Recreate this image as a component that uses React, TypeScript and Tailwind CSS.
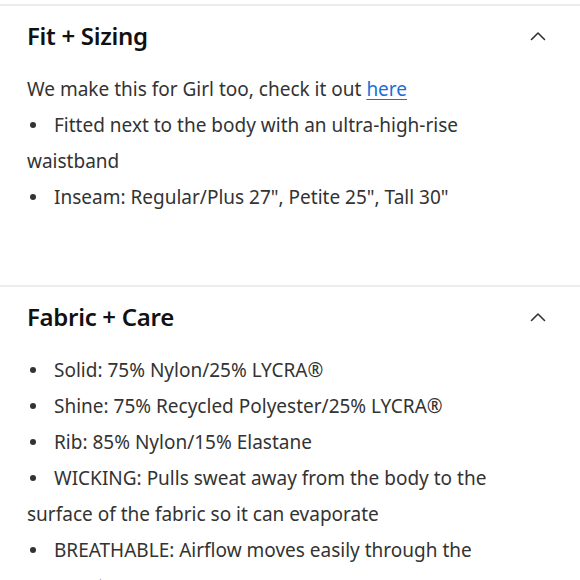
import React from 'react';

const fitItems = [
  'Fitted next to the body with an ultra-high-rise waistband',
  'Inseam: Regular/Plus 27", Petite 25", Tall 30"',
];

const fabricItems = [
  'Solid: 75% Nylon/25% LYCRA®',
  'Shine: 75% Recycled Polyester/25% LYCRA®',
  'Rib: 85% Nylon/15% Elastane',
  'WICKING: Pulls sweat away from the body to the surface of the fabric so it can evaporate',
  'BREATHABLE: Airflow moves easily through the garment',
];

const Chevron: React.FC = () => (
  <svg width="16" height="10" viewBox="0 0 16 10" fill="none" className="text-[#333]">
    <path d="M1.5 8.5 L8 2 L14.5 8.5" stroke="currentColor" strokeWidth="1.6" strokeLinecap="round" strokeLinejoin="round" />
  </svg>
);

const Bullet: React.FC<{ text: string }> = ({ text }) => (
  <p>
    <span className="inline-block w-[6px] h-[6px] rounded-full bg-[#333] align-middle ml-[3px] mr-[18px] mb-[3px]" />
    {text}
  </p>
);

const Section: React.FC<{ title: string; children: React.ReactNode; padBottom?: string }> = ({ title, children, padBottom }) => (
  <section className="border-t-2 border-[#ececec]">
    <div className="flex items-center justify-between pl-[27px] pr-[34px] h-[65px] pb-[6px]">
      <h2 className="text-[24px] font-semibold text-[#111] tracking-[-0.3px]">{title}</h2>
      <Chevron />
    </div>
    <div className={`pl-[27px] pr-[45px] text-[19px] leading-[36px] text-[#333] ${padBottom ?? ''}`}>{children}</div>
  </section>
);

export default function App() {
  return (
    <div className="w-[580px] h-[580px] overflow-hidden bg-white pt-[4px]" style={{ fontFamily: '"Noto Sans", sans-serif' }}>
      <Section title="Fit + Sizing" padBottom="pb-[70px]">
        <p>
          We make this for Girl too, check it out{' '}
          <a href="#" className="text-[#1a6fd6] underline underline-offset-[3px]">here</a>
        </p>
        {fitItems.map((t) => (
          <Bullet key={t} text={t} />
        ))}
      </Section>
      <Section title="Fabric + Care">
        {fabricItems.map((t) => (
          <Bullet key={t} text={t} />
        ))}
      </Section>
    </div>
  );
}
